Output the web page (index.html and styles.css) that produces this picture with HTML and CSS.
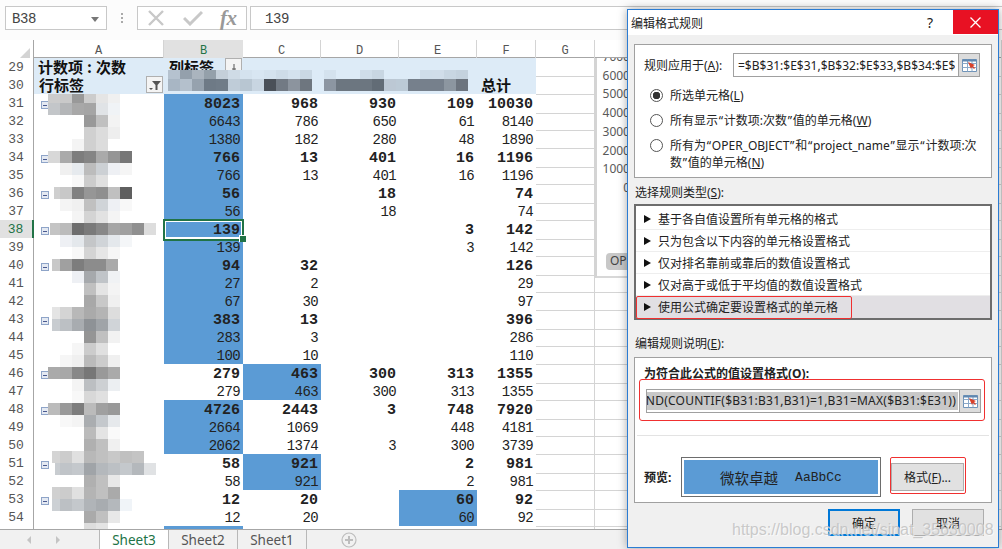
FILE: index.html
```html
<!DOCTYPE html>
<html lang="zh">
<head>
<meta charset="utf-8">
<title>编辑格式规则</title>
<link rel="stylesheet" href="styles.css">
</head>
<body>
<div class="app">
  <div class="topbar">
    <div class="namebox">B38<span class="caret"></span></div>
    <div class="dots"></div>
    <div class="fxbtns">
      <svg class="ico" width="18" height="16" viewBox="0 0 18 16"><path d="M2 1l14 14M16 1L2 15" fill="none" stroke="#c8c8c8" stroke-width="2.4"/></svg>
      <svg class="ico" width="20" height="16" viewBox="0 0 20 16"><path d="M1 8l6 6L19 2" fill="none" stroke="#c8c8c8" stroke-width="3"/></svg>
      <span class="fx">fx</span>
    </div>
    <div class="formula">139</div>
  </div>

  <div class="sheet">
    <div class="row head">
      <span class="hd corner"></span><span class="col">A</span><span class="col on">B</span><span class="col">C</span><span class="col">D</span><span class="col">E</span><span class="col">F</span><span class="col">G</span><span class="col"></span>
    </div>
    <div class="row pv"><span class="hd">29</span><span class="c lab">计数项<span class="colon">:</span>次数</span><span class="c lab split">列标签<i class="drop"><svg width="16" height="16" viewBox="0 0 16 16"><path d="M8 5v6M6 10h4" stroke="#555" fill="none"/></svg></i></span><span class="c"></span><span class="c"></span><span class="c"></span><span class="c"></span><span class="g"></span><span class="g"></span></div>
    <div class="row pv end"><span class="hd">30</span><span class="c lab split">行标签<i class="drop"><svg width="16" height="16" viewBox="0 0 16 16"><path d="M5 4h9l-3.5 4v5h-2V8z" fill="#555"/><path d="M2 11h4l-2 2z" fill="#555"/></svg></i></span><span class="c"></span><span class="c"></span><span class="c"></span><span class="c"></span><span class="c lab">总计</span><span class="g"></span><span class="g"></span></div>

    <div class="row sum"><span class="hd">31</span><span class="c"><i class="minus"></i></span><span class="n hl">8023</span><span class="n">968</span><span class="n">930</span><span class="n">109</span><span class="n">10030</span><span class="g"></span><span class="g"></span></div>
    <div class="row"><span class="hd">32</span><span class="c"></span><span class="n hl">6643</span><span class="n">786</span><span class="n">650</span><span class="n">61</span><span class="n">8140</span><span class="g"></span><span class="g"></span></div>
    <div class="row"><span class="hd">33</span><span class="c"></span><span class="n hl">1380</span><span class="n">182</span><span class="n">280</span><span class="n">48</span><span class="n">1890</span><span class="g"></span><span class="g"></span></div>
    <div class="row sum"><span class="hd">34</span><span class="c"><i class="minus"></i></span><span class="n hl">766</span><span class="n">13</span><span class="n">401</span><span class="n">16</span><span class="n">1196</span><span class="g"></span><span class="g"></span></div>
    <div class="row"><span class="hd">35</span><span class="c"></span><span class="n hl">766</span><span class="n">13</span><span class="n">401</span><span class="n">16</span><span class="n">1196</span><span class="g"></span><span class="g"></span></div>
    <div class="row sum"><span class="hd">36</span><span class="c"><i class="minus"></i></span><span class="n hl">56</span><span class="n"></span><span class="n">18</span><span class="n"></span><span class="n">74</span><span class="g"></span><span class="g"></span></div>
    <div class="row"><span class="hd">37</span><span class="c"></span><span class="n hl">56</span><span class="n"></span><span class="n">18</span><span class="n"></span><span class="n">74</span><span class="g"></span><span class="g"></span></div>
    <div class="row sum"><span class="hd on">38</span><span class="c"><i class="minus"></i></span><span class="n hl sel">139</span><span class="n"></span><span class="n"></span><span class="n">3</span><span class="n">142</span><span class="g"></span><span class="g"></span></div>
    <div class="row"><span class="hd">39</span><span class="c"></span><span class="n hl">139</span><span class="n"></span><span class="n"></span><span class="n">3</span><span class="n">142</span><span class="g"></span><span class="g"></span></div>
    <div class="row sum"><span class="hd">40</span><span class="c"><i class="minus"></i></span><span class="n hl">94</span><span class="n">32</span><span class="n"></span><span class="n"></span><span class="n">126</span><span class="g"></span><span class="g"></span></div>
    <div class="row"><span class="hd">41</span><span class="c"></span><span class="n hl">27</span><span class="n">2</span><span class="n"></span><span class="n"></span><span class="n">29</span><span class="g"></span><span class="g"></span></div>
    <div class="row"><span class="hd">42</span><span class="c"></span><span class="n hl">67</span><span class="n">30</span><span class="n"></span><span class="n"></span><span class="n">97</span><span class="g"></span><span class="g"></span></div>
    <div class="row sum"><span class="hd">43</span><span class="c"><i class="minus"></i></span><span class="n hl">383</span><span class="n">13</span><span class="n"></span><span class="n"></span><span class="n">396</span><span class="g"></span><span class="g"></span></div>
    <div class="row"><span class="hd">44</span><span class="c"></span><span class="n hl">283</span><span class="n">3</span><span class="n"></span><span class="n"></span><span class="n">286</span><span class="g"></span><span class="g"></span></div>
    <div class="row"><span class="hd">45</span><span class="c"></span><span class="n hl">100</span><span class="n">10</span><span class="n"></span><span class="n"></span><span class="n">110</span><span class="g"></span><span class="g"></span></div>
    <div class="row sum"><span class="hd">46</span><span class="c"><i class="minus"></i></span><span class="n">279</span><span class="n hl">463</span><span class="n">300</span><span class="n">313</span><span class="n">1355</span><span class="g"></span><span class="g"></span></div>
    <div class="row"><span class="hd">47</span><span class="c"></span><span class="n">279</span><span class="n hl">463</span><span class="n">300</span><span class="n">313</span><span class="n">1355</span><span class="g"></span><span class="g"></span></div>
    <div class="row sum"><span class="hd">48</span><span class="c"><i class="minus"></i></span><span class="n hl">4726</span><span class="n">2443</span><span class="n">3</span><span class="n">748</span><span class="n">7920</span><span class="g"></span><span class="g"></span></div>
    <div class="row"><span class="hd">49</span><span class="c"></span><span class="n hl">2664</span><span class="n">1069</span><span class="n"></span><span class="n">448</span><span class="n">4181</span><span class="g"></span><span class="g"></span></div>
    <div class="row"><span class="hd">50</span><span class="c"></span><span class="n hl">2062</span><span class="n">1374</span><span class="n">3</span><span class="n">300</span><span class="n">3739</span><span class="g"></span><span class="g"></span></div>
    <div class="row sum"><span class="hd">51</span><span class="c"><i class="minus"></i></span><span class="n">58</span><span class="n hl">921</span><span class="n"></span><span class="n">2</span><span class="n">981</span><span class="g"></span><span class="g"></span></div>
    <div class="row"><span class="hd">52</span><span class="c"></span><span class="n">58</span><span class="n hl">921</span><span class="n"></span><span class="n">2</span><span class="n">981</span><span class="g"></span><span class="g"></span></div>
    <div class="row sum"><span class="hd">53</span><span class="c"><i class="minus"></i></span><span class="n">12</span><span class="n">20</span><span class="n"></span><span class="n hl">60</span><span class="n">92</span><span class="g"></span><span class="g"></span></div>
    <div class="row"><span class="hd">54</span><span class="c"></span><span class="n">12</span><span class="n">20</span><span class="n"></span><span class="n hl">60</span><span class="n">92</span><span class="g"></span><span class="g"></span></div>
    <div class="row"><span class="hd"></span><span class="c"></span><span class="n hl"></span><span class="n"></span><span class="n"></span><span class="n"></span><span class="n"></span><span class="g"></span><span class="g"></span></div>

    <!-- pixelated names laid over the pivot table -->
    <svg class="mosaic" width="640" height="489" viewBox="0 40 640 489">
      <g class="px">
        <rect x="168" y="70" fill="#b5c2cf"/><rect x="180" y="70" fill="#94a0ac"/><rect x="192" y="70" fill="#aab4be"/><rect x="204" y="70" fill="#94a0aa"/><rect x="216" y="70" fill="#c4cfd9"/><rect x="228" y="70" fill="#cfdbe6"/><rect x="240" y="70" fill="#d4e2ee"/><rect x="252" y="70" fill="#d8e6f2"/><rect x="264" y="70" fill="#d4e2ee"/><rect x="276" y="70" fill="#cedce8"/><rect x="288" y="70" fill="#d4e2ee"/><rect x="300" y="70" fill="#cad8e4"/><rect x="324" y="70" fill="#d4e2ee"/><rect x="360" y="70" fill="#cfdde9"/><rect x="372" y="70" fill="#c8d6e2"/><rect x="420" y="70" fill="#cfdde9"/><rect x="432" y="70" fill="#d0dde9"/><rect x="444" y="70" fill="#c8d6e2"/><rect x="456" y="70" fill="#c4d2de"/>
        <rect x="168" y="79" fill="#a8b6c4"/><rect x="180" y="79" fill="#b4c0cc"/><rect x="192" y="79" fill="#96a2ae"/><rect x="204" y="79" fill="#6e7a86"/><rect x="216" y="79" fill="#707c88"/><rect x="228" y="79" fill="#bfccd8"/><rect x="240" y="79" fill="#b8c6d2"/><rect x="252" y="79" fill="#c8d5e1"/><rect x="264" y="79" fill="#4a5058"/><rect x="276" y="79" fill="#727a84"/><rect x="288" y="79" fill="#8c949e"/><rect x="300" y="79" fill="#6e767f"/><rect x="324" y="79" fill="#8c96a2"/><rect x="336" y="79" fill="#6c7680"/><rect x="348" y="79" fill="#6c7680"/><rect x="360" y="79" fill="#6c7680"/><rect x="372" y="79" fill="#626c76"/><rect x="384" y="79" fill="#bcc8d4"/><rect x="396" y="79" fill="#bccad6"/><rect x="408" y="79" fill="#76808c"/><rect x="420" y="79" fill="#76808c"/><rect x="432" y="79" fill="#76808c"/><rect x="444" y="79" fill="#8c96a0"/><rect x="456" y="79" fill="#6c747e"/>

        <rect x="48" y="94" fill="#ccc"/><rect x="60" y="94" fill="#c9c9c9"/><rect x="72" y="94" fill="#999"/><rect x="84" y="94" fill="#ccc"/><rect x="96" y="94" fill="#e5e5e5"/><rect x="108" y="94" fill="#f0f0f0"/>
        <rect x="48" y="103" fill="#c3c6c9"/><rect x="60" y="103" fill="#b4b6b8"/><rect x="72" y="103" fill="#a8a8a8"/><rect x="84" y="103" fill="#a5a5a5"/><rect x="96" y="103" fill="#e0e3e6"/><rect x="108" y="103" fill="#f0f3f6"/>
        <rect x="84" y="115" fill="#999"/><rect x="96" y="115" fill="#c0c0c0"/><rect x="108" y="115" fill="#f3f3f3"/>
        <rect x="84" y="127" fill="#d0d0d0"/><rect x="96" y="127" fill="#dcdcdc"/><rect x="108" y="127" fill="#eee"/>
        <rect x="84" y="139" fill="#d0d0d0"/><rect x="96" y="139" fill="#dcdcdc"/><rect x="72" y="139" fill="#f4f4f4"/>
        <rect x="48" y="151" fill="#d8d8d8"/><rect x="60" y="151" fill="#aaa"/><rect x="72" y="151" fill="#7d7d7d"/><rect x="84" y="151" fill="#858585"/><rect x="96" y="151" fill="#aaa"/><rect x="108" y="151" fill="#959595"/><rect x="120" y="151" fill="#777"/>
        <rect x="60" y="163" fill="#f0f0f0"/><rect x="72" y="163" fill="#e6eaee"/><rect x="84" y="163" fill="#bcbcbc"/><rect x="96" y="163" fill="#ccd0d4"/><rect x="108" y="163" fill="#eef0f4"/><rect x="120" y="163" fill="#f5f5f5"/>
        <rect x="84" y="175" fill="#ccc"/><rect x="96" y="175" fill="#e0e0e0"/><rect x="72" y="175" fill="#f8f8f8"/>
        <rect x="54" y="187" fill="#cfcfcf"/><rect x="60" y="187" fill="#c8c8c8"/><rect x="72" y="187" fill="#808080"/><rect x="84" y="187" fill="#969696"/><rect x="96" y="187" fill="#8f8f8f"/><rect x="108" y="187" fill="#c0c0c0"/><rect x="120" y="187" fill="#5f5f5f"/>
        <rect x="60" y="199" fill="#f4f4f4"/><rect x="72" y="199" fill="#f0f0f0"/><rect x="84" y="199" fill="#c0c0c0"/><rect x="96" y="199" fill="#d0d4d8"/><rect x="108" y="199" fill="#eef0f4"/><rect x="120" y="199" fill="#f8f8f8"/>
        <rect x="72" y="211" fill="#f4f4f4"/><rect x="84" y="211" fill="#d4d4d4"/><rect x="96" y="211" fill="#e2e2e2"/><rect x="108" y="211" fill="#f4f4f4"/>
        <rect x="50" y="223" fill="#c4c4c4"/><rect x="60" y="223" fill="#bbb"/><rect x="72" y="223" fill="#6e6e6e"/><rect x="84" y="223" fill="#7a7a7a"/><rect x="96" y="223" fill="#888"/><rect x="108" y="223" fill="#a5a5a5"/><rect x="120" y="223" fill="#a0a0a0"/><rect x="132" y="223" fill="#909090"/><rect x="144" y="223" fill="#ddd"/>
        <rect x="60" y="235" fill="#eef0f4"/><rect x="72" y="235" fill="#e4e8ec"/><rect x="84" y="235" fill="#c4c6c8"/><rect x="96" y="235" fill="#d0d4d8"/><rect x="108" y="235" fill="#e4e8ec"/><rect x="120" y="235" fill="#f4f6f8"/>
        <rect x="72" y="247" fill="#f8f8f8"/><rect x="84" y="247" fill="#d4d4d4"/><rect x="96" y="247" fill="#e6e6e6"/><rect x="108" y="247" fill="#f6f6f6"/>
        <rect x="52" y="259" fill="#c8c8c8"/><rect x="60" y="259" fill="#a0a0a0"/><rect x="72" y="259" fill="#7d7d7d"/><rect x="84" y="259" fill="#8c8c8c"/><rect x="96" y="259" fill="#8c8c8c"/><rect x="106" y="259" fill="#aaa"/>
        <rect x="72" y="271" fill="#eef0f4"/><rect x="84" y="271" fill="#a6a9ac"/><rect x="96" y="271" fill="#c0c4c8"/><rect x="108" y="271" fill="#f0f2f4"/>
        <rect x="84" y="283" fill="#c0c0c0"/><rect x="96" y="283" fill="#e4e4e4"/><rect x="108" y="283" fill="#f4f4f4"/>
        <rect x="84" y="295" fill="#a8a8a8"/><rect x="96" y="295" fill="#c8c8c8"/><rect x="108" y="295" fill="#f0f0f0"/>
        <rect x="52" y="307" fill="#e4e4e4"/><rect x="60" y="307" fill="#d4d4d4"/><rect x="72" y="307" fill="#b8b8b8"/><rect x="84" y="307" fill="#aaa"/><rect x="96" y="307" fill="#b4b4b4"/><rect x="108" y="307" fill="#ddd"/>
        <rect x="52" y="319" fill="#c8ccd0"/><rect x="60" y="319" fill="#bcc0c4"/><rect x="72" y="319" fill="#a8acb0"/><rect x="84" y="319" fill="#8e9296"/><rect x="96" y="319" fill="#a0a4a8"/><rect x="108" y="319" fill="#d0d4d8"/>
        <rect x="84" y="331" fill="#959595"/><rect x="96" y="331" fill="#c0c0c0"/><rect x="108" y="331" fill="#f2f2f2"/>
        <rect x="84" y="343" fill="#ccc"/><rect x="96" y="343" fill="#e0e0e0"/><rect x="72" y="343" fill="#f6f6f6"/>
        <rect x="60" y="355" fill="#f6f6f6"/><rect x="72" y="355" fill="#f0f0f0"/><rect x="84" y="355" fill="#bbb"/><rect x="96" y="355" fill="#ccc"/><rect x="108" y="355" fill="#f0f0f0"/>
        <rect x="48" y="367" fill="#aaa"/><rect x="60" y="367" fill="#a8a8a8"/><rect x="72" y="367" fill="#888"/><rect x="84" y="367" fill="#777"/><rect x="96" y="367" fill="#999"/><rect x="108" y="367" fill="#aaa"/>
        <rect x="72" y="379" fill="#f4f4f4"/><rect x="84" y="379" fill="#bcbfc2"/><rect x="96" y="379" fill="#cdd0d3"/><rect x="108" y="379" fill="#eceff2"/>
        <rect x="72" y="391" fill="#f8f8f8"/><rect x="84" y="391" fill="#d8d8d8"/><rect x="96" y="391" fill="#e0e0e0"/>
        <rect x="48" y="403" fill="#bbb"/><rect x="60" y="403" fill="#999"/><rect x="72" y="403" fill="#7d7d7d"/><rect x="84" y="403" fill="#bbb"/><rect x="96" y="403" fill="#a0a0a0"/><rect x="108" y="403" fill="#999"/>
        <rect x="60" y="415" fill="#f8f8f8"/><rect x="72" y="415" fill="#f4f4f4"/><rect x="84" y="415" fill="#aaadb0"/><rect x="96" y="415" fill="#c4c8cc"/><rect x="108" y="415" fill="#e6e9ec"/>
        <rect x="84" y="427" fill="#bbb"/><rect x="96" y="427" fill="#e4e4e4"/><rect x="108" y="427" fill="#fafafa"/>
        <rect x="84" y="439" fill="#b0b0b0"/><rect x="96" y="439" fill="#c0c0c0"/><rect x="108" y="439" fill="#f0f0f0"/>
        <rect x="52" y="451" fill="#d4d4d4"/><rect x="60" y="451" fill="#ccc"/><rect x="72" y="451" fill="#e0e0e0"/><rect x="84" y="451" fill="#b8b8b8"/><rect x="96" y="451" fill="#c0c0c0"/><rect x="108" y="451" fill="#c8c8c8"/><rect x="120" y="451" fill="#c0c0c0"/><rect x="132" y="451" fill="#c4c4c4"/>
        <rect x="55" y="463" fill="#c8ccd0"/><rect x="60" y="463" fill="#c0c4c8"/><rect x="72" y="463" fill="#c4c8cc"/><rect x="84" y="463" fill="#a0a4a8"/><rect x="96" y="463" fill="#b4b8bc"/><rect x="108" y="463" fill="#bcc0c4"/><rect x="120" y="463" fill="#c4c8cc"/><rect x="132" y="463" fill="#b4b8bc"/><rect x="144" y="463" fill="#e0e2e4"/>
        <rect x="84" y="475" fill="#b0b0b0"/><rect x="96" y="475" fill="#c0c0c0"/><rect x="108" y="475" fill="#e8e8e8"/>
        <rect x="52" y="487" fill="#d0d0d0"/><rect x="60" y="487" fill="#ccc"/><rect x="72" y="487" fill="#e0e0e0"/><rect x="84" y="487" fill="#b4b4b4"/><rect x="96" y="487" fill="#c0c0c0"/><rect x="108" y="487" fill="#aaa"/>
        <rect x="52" y="499" fill="#ccd0d4"/><rect x="60" y="499" fill="#bcc0c4"/><rect x="72" y="499" fill="#c4c8cc"/><rect x="84" y="499" fill="#b0b4b8"/><rect x="96" y="499" fill="#a8acb0"/><rect x="108" y="499" fill="#b4b8bc"/><rect x="120" y="499" fill="#f0f4f8"/>
        <rect x="84" y="511" fill="#aaa"/><rect x="96" y="511" fill="#c0c0c0"/><rect x="108" y="511" fill="#e8e8e8"/>
        <rect x="84" y="523" fill="#ddd"/><rect x="96" y="523" fill="#e4e4e4"/>
      </g>
    </svg>

    <!-- chart floating over the grid, mostly hidden by the dialog -->
    <div class="chart">
      <div class="axis"><span>7000</span><span>6000</span><span>5000</span><span>4000</span><span>3000</span><span>2000</span><span>1000</span><span>0</span></div>
      <div class="chartbtn">OP</div>
    </div>
  </div>

  <div class="tabs">
    <div class="nav">
      <svg width="8" height="10" viewBox="0 0 8 10"><path d="M6 1L2 5l4 4z" fill="#c4c4c4"/></svg>
      <svg width="8" height="10" viewBox="0 0 8 10"><path d="M2 1l4 4-4 4z" fill="#c4c4c4"/></svg>
    </div>
    <div class="tab active">Sheet3</div>
    <div class="tab">Sheet2</div>
    <div class="tab">Sheet1</div>
    <svg class="addsheet" width="16" height="16" viewBox="0 0 16 16"><circle cx="8" cy="8" r="7" fill="none" stroke="#bdbdbd" stroke-width="1.2"/><path d="M8 4v8M4 8h8" stroke="#bdbdbd" stroke-width="2"/></svg>
  </div>
</div>

<div class="dialog">
  <div class="titlebar">
    <span class="title">编辑格式规则</span>
    <span class="help">?</span>
    <span class="close"><svg width="11" height="11" viewBox="0 0 11 11"><path d="M.5.5l10 10M10.5.5l-10 10" stroke="#fff" stroke-width="1.3"/></svg></span>
  </div>
  <div class="dbody">
    <div class="group first">
      <div class="apply">
        <label class="applylabel">规则应用于(<u>A</u>):</label>
        <div class="input"><span class="inner">=$B$31:$E$31,$B$32:$E$33,$B$34:$E$35</span></div>
        <span class="picker"><svg width="15" height="13" viewBox="0 0 15 13"><path d="M.5.5h14v12H.5z" fill="#fff" stroke="#6f93b8"/><path d="M.5 4.5h14M.5 8.5h14M5.5.5v12M10 .5v12" stroke="#8aa8c8"/><path d="M.5.5h14v2H.5z" fill="#5f87b0"/><path d="M6 3l7 3-2 1 2 2-1 1-2-2-1 2z" fill="#d8402a"/></svg></span>
      </div>
      <div class="radios">
        <div class="radio checked"><i></i><span>所选单元格(<u>L</u>)</span></div>
        <div class="radio"><i></i><span>所有显示<span class="q">“</span>计数项:次数<span class="q">”</span>值的单元格(<u>W</u>)</span></div>
        <div class="radio"><i></i><span>所有为<span class="q">“</span>OPER_OBJECT<span class="q">”</span>和<span class="q">“</span>project_name<span class="q">”</span>显示<span class="q">“</span>计数项:次数<span class="q">”</span>值的单元格(<u>N</u>)</span></div>
      </div>
    </div>

    <div class="seclabel one">选择规则类型(<u>S</u>):</div>
    <div class="rules">
      <div class="rule">基于各自值设置所有单元格的格式</div>
      <div class="rule">只为包含以下内容的单元格设置格式</div>
      <div class="rule">仅对排名靠前或靠后的数值设置格式</div>
      <div class="rule">仅对高于或低于平均值的数值设置格式</div>
      <div class="rule current">使用公式确定要设置格式的单元格</div>
    </div>

    <div class="seclabel two">编辑规则说明(<u>E</u>):</div>
    <div class="group second">
      <div class="boldlabel">为符合此公式的值设置格式(O):</div>
      <div class="formularow">
        <div class="finput"><span class="fsel">=AND(COUNTIF($B31:B31,B31)=1,B31=MAX($B31:$E31))</span></div>
        <span class="picker"><svg width="15" height="13" viewBox="0 0 15 13"><path d="M.5.5h14v12H.5z" fill="#fff" stroke="#6f93b8"/><path d="M.5 4.5h14M.5 8.5h14M5.5.5v12M10 .5v12" stroke="#8aa8c8"/><path d="M.5.5h14v2H.5z" fill="#5f87b0"/><path d="M6 3l7 3-2 1 2 2-1 1-2-2-1 2z" fill="#d8402a"/></svg></span>
      </div>
      <div class="divider"></div>
      <div class="previewrow">
        <span class="prevlabel">预览:</span>
        <div class="preview"><div class="sample"><span class="cn">微软卓越</span><span class="en">AaBbCc</span></div></div>
        <div class="fmtwrap"><button class="btn fmt">格式(<u>F</u>)...</button></div>
      </div>
    </div>

    <div class="actions">
      <button class="btn primary">确定</button>
      <button class="btn">取消</button>
    </div>
  </div>
  <div class="watermark">https://blog.csdn.net/sinat_35630008</div>
</div>
</body>
</html>
```

FILE: styles.css
```css
* {
    box-sizing: border-box;
}

html, body {
    margin: 0;
    height: 100%;
    overflow: hidden;
}

body {
    background: #fff;
    font-family: "Noto Sans", "Noto Sans CJK SC", sans-serif;
    font-size: 12px;
    color: #222;
}

.app {
    display: flex;
    flex-direction: column;
    height: 549px;
}

/* formula bar */
.topbar {
    height: 40px;
    flex: none;
    display: flex;
    align-items: flex-start;
    padding: 6px 0 0 5px;
    background: #fcfcfc;
    font-family: "Liberation Mono", monospace;
    font-size: 14px;
    letter-spacing: -.4px;
    color: #444;
}

.namebox, .fxbtns, .formula {
    height: 24px;
    border: 1px solid #c8c8c8;
    background: #fff;
}

.namebox {
    width: 102px;
    display: flex;
    align-items: center;
    justify-content: space-between;
    padding: 2px 7px 0 6px;
}

.caret {
    border: 4px solid transparent;
    border-top: 5px solid #777;
    border-bottom: 0;
}

.dots {
    width: 2px;
    height: 10px;
    margin: 7px 14px 0 14px;
    background: repeating-linear-gradient(#aaa 0 2px, transparent 2px 4px);
}

.fxbtns {
    width: 110px;
    display: flex;
    align-items: center;
    padding-left: 9px;
    gap: 18px;
}

.fx {
    font-family: "Liberation Serif", serif;
    font-style: italic;
    font-weight: bold;
    font-size: 21px;
    line-height: 20px;
    color: #999;
    margin-left: -1px;
}

.formula {
    flex: 1;
    margin-left: 3px;
    padding: 4px 14px;
    border-right: 0;
}

/* the sheet */
.sheet {
    flex: 1;
    position: relative;
    overflow: hidden;
    font-family: "Liberation Mono", monospace;
    font-size: 14px;
}

.row {
    display: grid;
    grid-template-columns: 34px 130px 79px 78px 78px 78px 59px 59px 1fr;
    height: 18px;
    line-height: 17px;
    color: #222;
}

.hd {
    text-align: center;
    font-size: 13px;
    color: #555;
    border-right: 1px solid #a6a6a6;
    border-bottom: 1px solid #d4d4d4;
    background: #fff;
    padding: 1px 1px 0 0;
}

.hd.on {
    background: #e1e1e1;
    color: #217346;
    border-right: 2px solid #217346;
}

.head {
    border-bottom: 1px solid #a6a6a6;
    color: #555;
}

.head .col {
    text-align: center;
    border-right: 1px solid #d4d4d4;
    font-size: 12px;
    padding-top: 3px;
}

.head .col.on {
    background: #e1e1e1;
    color: #217346;
    border-bottom: 2px solid #217346;
    margin-bottom: -1px;
    border-right: 0;
}

.corner {
    border-bottom: 0;
    position: relative;
}

.corner::after {
    content: "";
    position: absolute;
    right: 3px;
    bottom: 3px;
    border-left: 10px solid transparent;
    border-bottom: 10px solid #d4d4d4;
}

.c, .n {
    background: #fff;
    position: relative;
}

.n {
    text-align: right;
    padding: 2px 3px 0 0;
    letter-spacing: -.6px;
    white-space: nowrap;
}

.g {
    border-right: 1px solid #d4d4d4;
    border-bottom: 1px solid #d4d4d4;
}

.sum .c, .sum .n {
    border-bottom: 1px solid #a3bfe0;
}

.sum .n {
    font-weight: bold;
    font-size: 15px;
    letter-spacing: 0;
}

.n.hl, .sum .n.hl {
    background: #5b9bd5;
    border-bottom-color: #5b9bd5;
}

.sel {
    outline: 2px solid #217346;
    outline-offset: -1px;
    box-shadow: inset 0 0 0 2px #fff;
    z-index: 2;
}

.sel::after {
    content: "";
    position: absolute;
    right: -3px;
    bottom: -3px;
    width: 6px;
    height: 6px;
    background: #217346;
    border: 1px solid #fff;
    border-width: 1px 0 0 1px;
}

.pv .c {
    background: #ddebf7;
}

.pv.end .c {
    border-bottom: 1px solid #9dbde0;
}

.lab {
    font-family: "Noto Sans CJK SC", sans-serif;
    font-size: 15px;
    font-weight: bold;
    color: #111;
    padding-left: 4px;
    white-space: nowrap;
}

.colon {
    margin: 0 4px;
}

.lab.split {
    display: flex;
    justify-content: space-between;
    padding-left: 5px;
    padding-right: 1px;
}

.pv .lab {
    line-height: 18px;
}

.drop {
    width: 17px;
    height: 17px;
    background: #f4f4f4;
    border: 1px solid #b0b0b0;
    display: block;
}

.drop svg {
    display: block;
}

.minus {
    display: block;
    width: 8px;
    height: 8px;
    margin: 7px 0 0 7px;
    border: 1px solid #8ea4c8;
    background: linear-gradient(#4a5a90, #4a5a90) center / 4px 1px no-repeat, #e4e9f2;
}

.mosaic {
    position: absolute;
    left: 0;
    top: 0;
    z-index: 1;
}

.px rect {
    width: 12px;
    height: 12px;
}

.chart {
    position: absolute;
    left: 595px;
    top: 18px;
    width: 100px;
    height: 220px;
    background: #fff;
    border-left: 2px solid #d4d4d4;
    border-bottom: 2px solid #d8d8d8;
    overflow: hidden;
    font-family: "Noto Sans", sans-serif;
    font-size: 12px;
    color: #595959;
}

.axis {
    display: flex;
    flex-direction: column;
    align-items: flex-end;
    width: 33px;
    line-height: 18.7px;
    margin-top: -10px;
}

.chartbtn {
    position: absolute;
    left: 9px;
    top: 195px;
    width: 40px;
    height: 17px;
    padding-left: 4px;
    line-height: 16px;
    background: #c8c8c8;
    border-radius: 4px;
    color: #444;
}

/* sheet tabs */
.tabs {
    height: 20px;
    flex: none;
    display: flex;
    background: #f1f1f1;
    border-top: 1px solid #a6a6a6;
    font-family: "Noto Sans", sans-serif;
    font-size: 13.5px;
    line-height: 21px;
    color: #555;
}

.nav {
    width: 100px;
    display: flex;
    gap: 21px;
    padding: 5px 0 0 25px;
    border-right: 1px solid #b8b8b8;
}

.nav svg {
    display: block;
}

.tab {
    width: 69px;
    text-align: center;
    border-right: 1px solid #b8b8b8;
}

.tab.active {
    background: #fff;
    color: #217346;
}

.addsheet {
    margin: 2px 0 0 34px;
}

/* dialog */
.dialog {
    position: absolute;
    left: 627px;
    top: 9px;
    width: 372px;
    height: 539px;
    background: #f0f0f0;
    border: 1px solid #2b7cd3;
    box-shadow: 0 0 9px rgba(0, 0, 0, .35);
    z-index: 5;
}

.titlebar {
    height: 25px;
    background: #fff;
    display: flex;
    align-items: center;
    padding-left: 3px;
    font-size: 12px;
}

.title {
    flex: 1;
}

.help {
    font-size: 14px;
    margin-right: 20px;
}

.close {
    width: 45px;
    height: 24px;
    margin-top: -1px;
    background: #e81123;
    display: flex;
    align-items: center;
    justify-content: center;
}

.dbody {
    padding: 9px 6px 0;
}

.group {
    background: #fff;
    border: 1px solid #a0a0a0;
}

.group.first {
    height: 134px;
    padding: 8px 0 0 9px;
}

.apply {
    display: flex;
    height: 24px;
    align-items: stretch;
}

.applylabel {
    width: 89px;
    line-height: 26px;
}

.input {
    width: 226px;
    border: 1px solid #a0a0a0;
    padding: 0 3px 0 4px;
    line-height: 24px;
    overflow: hidden;
    white-space: nowrap;
}

.inner {
    display: block;
    overflow: hidden;
}

.picker {
    width: 21px;
    display: flex;
    align-items: center;
    justify-content: center;
    background: #dcdcdc;
    border: 1px solid #a0a0a0;
    border-left: 0;
}

.radios {
    margin: 10px 8px 0 6px;
    display: flex;
    flex-direction: column;
    gap: 8px;
    line-height: 17px;
}

.radio {
    display: flex;
    gap: 7px;
}

.radio i {
    flex: none;
    width: 13px;
    height: 13px;
    margin-top: 2px;
    border: 1px solid #555;
    border-radius: 50%;
    background: #fff;
}

.radio.checked i {
    background: radial-gradient(circle, #333 0 3.5px, #fff 4px);
}

.q {
    padding: 0 .75px;
}

.seclabel {
    line-height: 17px;
}

.seclabel.one {
    margin: 6px 0 3px 1px;
}

.seclabel.two {
    margin: 15px 0 5px 1px;
}

.rules {
    height: 116px;
    background: #fff;
    border: 2px solid #6d6d6d;
    padding-top: 2px;
}

.rule {
    position: relative;
    height: 22px;
    line-height: 23px;
    padding-left: 22px;
    border-bottom: 1px solid #eee;
}

.rule::before {
    content: "";
    position: absolute;
    left: 8px;
    top: 7px;
    border-left: 7px solid #111;
    border-top: 4px solid transparent;
    border-bottom: 4px solid transparent;
}

.rule:last-child {
    border-bottom: 0;
}

.rule.current {
    background: #e1dfe3;
}

.rule.current::after {
    content: "";
    position: absolute;
    left: 0;
    top: 0;
    width: 214px;
    height: 21px;
    border: 1px solid #f03030;
    border-radius: 2px;
}

.group.second {
    height: 146px;
    padding: 7px 0 0 9px;
}

.boldlabel, .prevlabel {
    font-weight: bold;
    line-height: 17px;
}

.formularow {
    position: relative;
    display: flex;
    height: 24px;
    width: 335px;
    margin: 7px 0 0 2px;
}

.formularow::after {
    content: "";
    position: absolute;
    inset: -10px -4px -8px -7px;
    border: 1px solid #f03030;
    border-radius: 3px;
}

.finput {
    width: 314px;
    background: #fff;
    border: 1px solid #a0a0a0;
    padding: 2px 1px;
    overflow: hidden;
    display: flex;
    justify-content: flex-end;
    white-space: nowrap;
}

.fsel {
    background: #c8c8c8;
    line-height: 18px;
    padding: 0 2px;
    letter-spacing: .25px;
}

.divider {
    height: 1px;
    margin: 22px 2px 0 -7px;
    background: #e3e3e3;
}

.previewrow {
    display: flex;
    align-items: center;
    margin-top: 21px;
}

.prevlabel {
    width: 37px;
}

.preview {
    width: 200px;
    height: 40px;
    border: 1px solid #6d6d6d;
    padding: 2px;
    background: #fff;
}

.sample {
    height: 100%;
    background: #5b9bd5;
    display: flex;
    align-items: center;
    justify-content: center;
    gap: 17px;
    color: #222;
}

.sample .cn {
    font-size: 14.5px;
}

.sample .en {
    font-family: "Liberation Mono", monospace;
    font-size: 13px;
}

.fmtwrap {
    position: relative;
    margin-left: 10px;
}

.fmtwrap::after {
    content: "";
    position: absolute;
    inset: -6px -2px -3px -1px;
    border: 1px solid #f03030;
    border-radius: 2px;
}

.btn {
    display: block;
    width: 72px;
    height: 27px;
    padding: 0;
    background: #e1e1e1;
    border: 1px solid #adadad;
    font-family: inherit;
    font-size: 12px;
    color: #222;
}

.btn.fmt {
    width: 73px;
    height: 28px;
}

.btn.primary {
    border: 2px solid #0078d7;
}

.actions {
    display: flex;
    justify-content: flex-end;
    gap: 12px;
    margin: 6px 8px 0 0;
}

.watermark {
    position: absolute;
    left: 104px;
    top: 510px;
    font-family: "Liberation Sans", sans-serif;
    font-size: 16px;
    line-height: 20px;
    color: rgba(190, 190, 190, .8);
    text-shadow: 1px 1px 0 rgba(255, 255, 255, .6);
    white-space: nowrap;
}
```
